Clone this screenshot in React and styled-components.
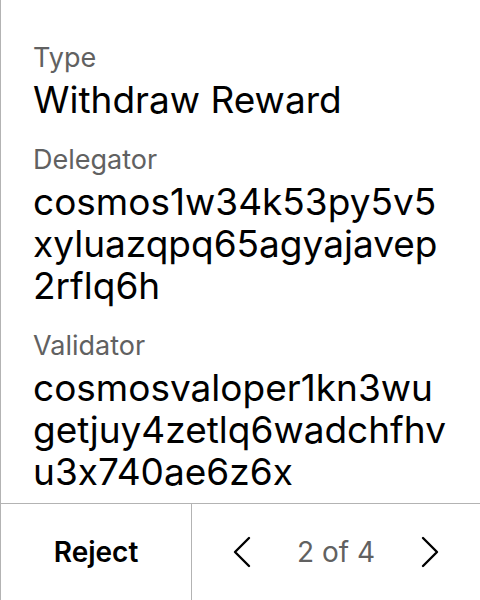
import React from "react";
import styled, { createGlobalStyle } from "styled-components";

const Global = createGlobalStyle`
  html, body { margin: 0; padding: 0; background: #fff; }
  body {
    font-family: Inter, "Noto Sans", sans-serif;
    font-feature-settings: "calt" 0;
    font-variant-ligatures: none;
  }
`;

const Screen = styled.div`
  width: 480px;
  height: 600px;
  box-sizing: border-box;
  border-left: 1px solid #b3b3b3;
  display: flex;
  flex-direction: column;
  background: #fff;
`;

const Content = styled.div`
  flex: 1;
  padding: 41px 34px 0 32px;
  display: flex;
  flex-direction: column;
  gap: 22px;
`;

const Field = styled.div`
  display: flex;
  flex-direction: column;
  gap: 5px;
`;

const Label = styled.div`
  font-size: 27px;
  line-height: 33px;
  color: #616161;
`;

const Value = styled.div`
  font-size: 37px;
  line-height: 42px;
  color: #000;
  word-break: break-all;
`;

const Footer = styled.div`
  height: 96px;
  border-top: 1px solid #b3b3b3;
  display: grid;
  grid-template-columns: 191px 1fr;
`;

const RejectButton = styled.button`
  border: none;
  border-right: 1px solid #b3b3b3;
  background: #fff;
  font-family: inherit;
  font-size: 28px;
  font-weight: 600;
  color: #000;
  padding: 0;
`;

const Pager = styled.div`
  display: flex;
  align-items: center;
  justify-content: space-between;
  padding: 0 40px;
`;

const Arrow = styled.button`
  border: none;
  background: none;
  padding: 0;
  width: 20px;
  height: 32px;
  display: flex;
  align-items: center;
  justify-content: center;
`;

const PageText = styled.span`
  font-size: 28px;
  color: #616161;
`;

const Chevron = ({ dir }) => (
  <svg width="20" height="32" viewBox="0 0 20 32" fill="none">
    <path
      d={dir === "left" ? "M17 2 L3 16 L17 30" : "M3 2 L17 16 L3 30"}
      stroke="#000"
      strokeWidth="2.4"
      strokeLinecap="round"
      strokeLinejoin="round"
    />
  </svg>
);

export default function App() {
  return (
    <>
      <Global />
      <Screen>
        <Content>
          <Field>
            <Label>Type</Label>
            <Value>Withdraw Reward</Value>
          </Field>
          <Field>
            <Label>Delegator</Label>
            <Value>cosmos1w34k53py5v5xyluazqpq65agyajavep2rflq6h</Value>
          </Field>
          <Field>
            <Label>Validator</Label>
            <Value>cosmosvaloper1kn3wugetjuy4zetlq6wadchfhvu3x740ae6z6x</Value>
          </Field>
        </Content>
        <Footer>
          <RejectButton>Reject</RejectButton>
          <Pager>
            <Arrow aria-label="Previous"><Chevron dir="left" /></Arrow>
            <PageText>2 of 4</PageText>
            <Arrow aria-label="Next"><Chevron dir="right" /></Arrow>
          </Pager>
        </Footer>
      </Screen>
    </>
  );
}
